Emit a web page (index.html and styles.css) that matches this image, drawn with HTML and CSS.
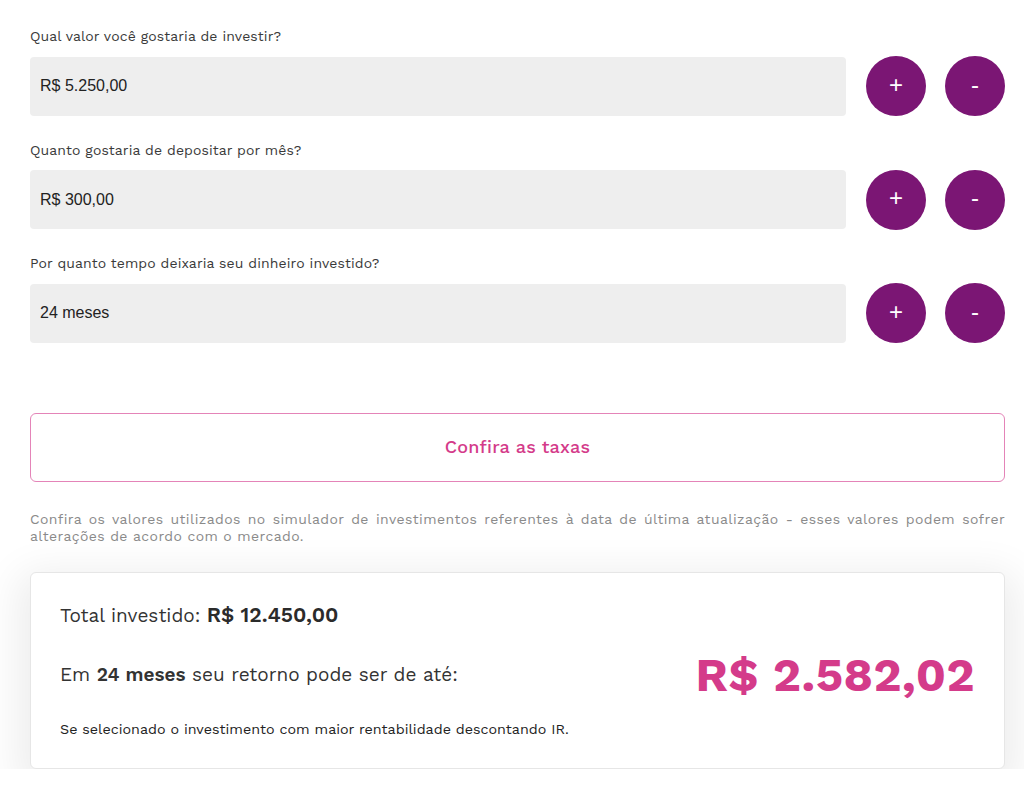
FILE: index.html
```html
<!DOCTYPE html>
<html lang="pt-BR">
<head>
<meta charset="utf-8">
<title>Simulador</title>
<link rel="stylesheet" href="styles.css">
</head>
<body>
<main class="sim">
  <div class="field">
    <label class="label">Qual valor você gostaria de investir?</label>
    <div class="row">
      <div class="input">R$ 5.250,00</div>
      <button class="circle">+</button>
      <button class="circle">-</button>
    </div>
  </div>
  <div class="field">
    <label class="label">Quanto gostaria de depositar por mês?</label>
    <div class="row">
      <div class="input">R$ 300,00</div>
      <button class="circle">+</button>
      <button class="circle">-</button>
    </div>
  </div>
  <div class="field">
    <label class="label">Por quanto tempo deixaria seu dinheiro investido?</label>
    <div class="row">
      <div class="input">24 meses</div>
      <button class="circle">+</button>
      <button class="circle">-</button>
    </div>
  </div>

  <button class="rates">Confira as taxas</button>

  <p class="note">Confira os valores utilizados no simulador de investimentos referentes à data de última atualização - esses valores podem sofrer alterações de acordo com o mercado.</p>

  <section class="card">
    <p class="total">Total investido: <strong>R$ 12.450,00</strong></p>
    <div class="result">
      <p class="ret">Em <strong>24 meses</strong> seu retorno pode ser de até:</p>
      <p class="value">R$ 2.582,02</p>
    </div>
    <p class="small">Se selecionado o investimento com maior rentabilidade descontando IR.</p>
  </section>
</main>
</body>
</html>
```

FILE: styles.css
```css
* { box-sizing: border-box; }
html, body { margin: 0; padding: 0; background: #fff; }
body { font-family: "Work Sans", "Open Sans", "Liberation Sans", sans-serif; color: #333; }

.sim {
  padding: 27px 19px 0 30px;
  display: flex;
  flex-direction: column;
}

.field { margin-bottom: 24.5px; }
.label {
  display: block;
  font-size: 14px;
  color: #3a3a3a;
  line-height: 18px;
  margin-bottom: 11px;
  letter-spacing: 0.1px;
}
.row { display: flex; align-items: center; gap: 20px; }
.input {
  flex: 1;
  height: 59px;
  background: #eeeeee;
  border-radius: 4px;
  display: flex;
  align-items: center;
  padding-left: 10px;
  font-family: "Liberation Sans", Arial, sans-serif;
  font-size: 16px;
  color: #222;
}
.circle {
  width: 60px;
  height: 60px;
  border-radius: 50%;
  border: 0;
  background: #7b1674;
  color: #fff;
  font-family: "Liberation Sans", Arial, sans-serif;
  font-size: 24px;
  line-height: 1;
  padding: 0 0 3px;
}
.circle + .circle { margin-left: -1px; }

.rates {
  margin-top: 45px;
  height: 69px;
  border: 1px solid #e484b8;
  border-radius: 6px;
  background: #fff;
  color: #d43b8a;
  font-family: "Work Sans", "Open Sans", sans-serif;
  font-weight: 500;
  font-size: 18px;
  letter-spacing: 0.2px;
  padding-bottom: 3px;
}

.note {
  margin: 29px 0 0;
  font-size: 14px;
  line-height: 17px;
  color: #8a8a8a;
  text-align: justify;
  letter-spacing: 0.4px;
}

.card {
  margin-top: 27px;
  height: 197px;
  background: #fff;
  border: 1px solid #e6e6e6;
  border-radius: 6px;
  box-shadow: 0 12px 40px 12px rgba(0,0,0,0.075);
  padding: 27px 29px 0 29px;
}
.card p { margin: 0; }
.total {
  font-size: 19px;
  color: #333;
  line-height: 30px;
}
.total strong { font-weight: 600; font-size: 21px; color: #2b2b2b; }
.result {
  display: flex;
  justify-content: space-between;
  align-items: center;
  margin-top: 14px;
  height: 60px;
}
.ret { font-size: 19px; color: #333; }
.ret strong { font-weight: 600; }
.value {
  font-size: 47px;
  font-weight: 700;
  color: #d43b8a;
  letter-spacing: 0.5px;
}
.small {
  margin-top: 15px !important;
  font-size: 14.3px;
  color: #222;
  line-height: 18px;
}
```
